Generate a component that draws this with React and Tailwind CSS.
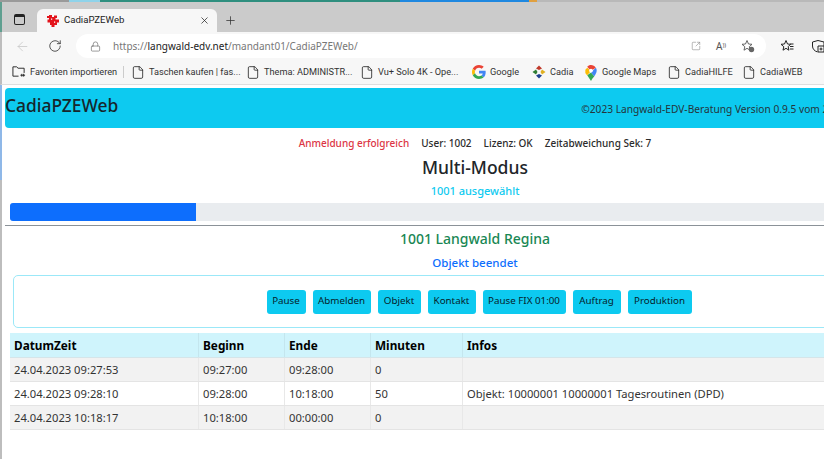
import React from "react";
import { ArrowLeft, RotateCw, Lock, X, Plus, File, SquareArrowOutUpRight } from "lucide-react";

const font = { fontFamily: '"Noto Sans", "Open Sans", sans-serif' };
const roboto = { fontFamily: 'Roboto, "Noto Sans", sans-serif' };

function FileIcon() {
  return <File className="w-[14px] h-[17px] text-[#222] shrink-0" strokeWidth={1.4} />;
}

function GoogleIcon() {
  return (
    <svg width="14" height="14" viewBox="0 0 48 48" className="shrink-0">
      <path fill="#EA4335" d="M24 9.5c3.5 0 6.7 1.2 9.2 3.6l6.9-6.9C35.9 2.4 30.5 0 24 0 14.6 0 6.5 5.4 2.6 13.2l8 6.2C12.500 13.600 17.800 9.500 24 9.500z" />
      <path fill="#4285F4" d="M46.900 24.500c0-1.600-.100-3.100-.400-4.500H24v9h12.900c-.600 3-2.200 5.500-4.700 7.200l7.700 6c4.500-4.200 7-10.300 7-17.700z" />
      <path fill="#FBBC05" d="M10.500 28.600c-.500-1.500-.800-3-.800-4.600s.300-3.200.800-4.600l-8-6.200C.900 16.500 0 20.100 0 24s.900 7.500 2.600 10.800l7.900-6.200z" />
      <path fill="#34A853" d="M24 48c6.500 0 11.900-2.100 15.900-5.800l-7.700-6c-2.200 1.400-4.900 2.300-8.200 2.300-6.200 0-11.500-4.100-13.400-9.800l-8 6.200C6.500 42.600 14.600 48 24 48z" />
    </svg>
  );
}

function CadiaIcon() {
  return (
    <svg width="14" height="14" viewBox="0 0 14 14" className="shrink-0">
      <path fill="#c0392b" d="M7 0.500 10 3.500 7 5 4 3.500z" />
      <path fill="#2e7d32" d="M0.500 7 4 4.500 5.500 7 4 9.500z" />
      <path fill="#e0b020" d="M13.500 7 10 4.500 8.500 7 10 9.500z" />
      <path fill="#1f3f8f" d="M7 13.500 4 10.500 7 9 10 10.500z" />
    </svg>
  );
}

function MapsIcon() {
  return (
    <svg width="14" height="17" viewBox="0 0 14 18" className="shrink-0">
      <path fill="#34A853" d="M3 12 7 18c1-2 2-3 3.500-5L7 9z" />
      <path fill="#FBBC05" d="M1 9.500C1.500 10.500 2.200 11 3 12l4-4.500L3 4 1 6z" />
      <path fill="#4285F4" d="M13 7c0-1.500-.500-2.500-1-3L7 9l3.500 4C12 11 13 9 13 7z" />
      <path fill="#EA4335" d="M12 4C11 2 9 1 7 1 5.500 1 4 1.700 3 3l4 4.500z" />
      <circle cx="7" cy="7" r="2" fill="#fff" />
    </svg>
  );
}

function Favicon() {
  return (
    <svg width="14" height="14" viewBox="0 0 14 14" className="shrink-0">
      <path fill="#e3131b" d="M3 1h3v2h2V1.500h3V4H9.500v1.500H13v3h-2V11H8.500v2h-3v-2H4V8.500H1.500v-3H3V4H1V2h2z" />
      <path fill="#fff" d="M5 4.500h1.200v1.200H5zM8 7.500h1.200v1.200H8z" />
    </svg>
  );
}

function Bookmark({ icon, label, labelWidth, className = "" }) {
  return (
    <div className={`flex items-center gap-[4px] shrink-0 ${className}`}>
      {icon}
      <span className={`text-[9.2px] text-[#333] whitespace-nowrap ${labelWidth}`} style={roboto}>
        {label}
      </span>
    </div>
  );
}

function Btn({ children, width }) {
  return (
    <div className={`h-[24px] flex items-center justify-center rounded-[3px] bg-[#0dcaf0] text-[9.8px] text-[#06222b] whitespace-nowrap ${width}`}>
      {children}
    </div>
  );
}

const cols = "grid grid-cols-[189px_86px_86px_92px_480px]";

function Row({ cells, shaded }) {
  return (
    <div className={`${cols} h-[24px] border-b border-[#e4e4e4] ${shaded ? "bg-[#f2f2f2]" : "bg-white"}`}>
      {cells.map((c, i) => (
        <div key={i} className="pl-[4px] pt-[1px] flex items-center border-r border-[#e8e8e8] text-[11.2px] text-[#333] whitespace-nowrap">
          {c}
        </div>
      ))}
    </div>
  );
}

export default function App() {
  return (
    <div className="w-[824px] h-[459px] overflow-hidden bg-white flex flex-col relative" style={font}>
      {/* desktop strip behind the window */}
      <div className="h-[2px] flex shrink-0 bg-[#b9b9b9]">
        <div className="w-[69px] bg-[#9a9a9a]" />
        <div className="w-[31px] bg-[#8fd3ea]" />
        <div className="w-[300px] bg-[#2f8f7f]" />
        <div className="w-[129px] bg-[#1f88e0]" />
        <div className="w-[8px] bg-[#e0a040]" />
      </div>

      {/* tab strip */}
      <div className="h-[30px] shrink-0 bg-[#cbcbcb] flex items-end pl-[9px] border-l-2 border-[#5f9f90]">
        <div className="w-[26px] h-[23px] flex items-center">
          <div className="w-[11px] h-[11px] border-[1.5px] border-[#222] rounded-[2px] border-t-[3px] ml-[3px] mb-[2px]" />
        </div>
        <div className="w-[180px] h-[23px] bg-[#f7f7f7] rounded-t-[6px] flex items-center pl-[9px] pr-[7px] shrink-0">
          <Favicon />
          <span className="ml-[4px] text-[9.6px] text-[#222]" style={roboto}>CadiaPZEWeb</span>
          <X className="w-[11px] h-[11px] ml-auto text-[#222]" strokeWidth={1.6} />
        </div>
        <div className="ml-[7px] h-[23px] flex items-center">
          <Plus className="w-[13px] h-[13px] text-[#333]" strokeWidth={1.4} />
        </div>
      </div>

      {/* toolbar */}
      <div className="h-[28px] shrink-0 bg-[#f7f7f7] flex items-center pl-[13px] border-l-2 border-[#bdbdbd]">
        <ArrowLeft className="w-[15px] h-[15px] text-[#c8c8c8] shrink-0" strokeWidth={1.3} />
        <RotateCw className="w-[14px] h-[14px] ml-[18px] text-[#333] shrink-0" strokeWidth={1.4} />
        <div className="w-[690px] shrink-0 h-[24px] ml-[14px] bg-white rounded-full flex items-center pl-[14px] pr-[11px]">
          <Lock className="w-[11px] h-[11px] text-[#666]" strokeWidth={1.4} />
          <span className="ml-[12px] text-[10px] text-[#777] whitespace-nowrap">
            https://<span className="text-[#222]">langwald-edv.net</span>/mandant01/CadiaPZEWeb/
          </span>
          <div className="ml-auto flex items-center gap-[15px]">
            <SquareArrowOutUpRight className="w-[10px] h-[10px] text-[#888]" strokeWidth={1.4} />
            <span className="text-[10px] text-[#555]">A<sup className="text-[6px]">))</sup></span>
            <svg width="14" height="14" viewBox="0 0 14 14">
              <path d="M6 1.500 7.500 5l3.500.3-2.700 2.400.8 3.500L6 9.300 3 11.200l.8-3.500L1 5.300 4.500 5z" fill="none" stroke="#555" strokeWidth="0.9" />
              <circle cx="10.500" cy="10.500" r="2.700" fill="#666" />
            </svg>
          </div>
        </div>
        <svg width="14" height="14" viewBox="0 0 14 14" className="ml-[14px] shrink-0">
          <path d="M6 1.500 7.500 5l3 .3-2.300 2.400.7 3.500L6 9.300 3 11.200l.8-3.500L1 5.300 4.500 5zM10 5h3.500M10 7.500h3.500M10 10h3.500" fill="none" stroke="#222" strokeWidth="1" />
        </svg>
        <svg width="14" height="14" viewBox="0 0 14 14" className="ml-[17px] shrink-0">
          <path d="M7 1.500 13 3v4M7 1.500 1.500 3v4c0 3 2 5 5 6M7 7h6v6H7zM10 8.500v3M8.500 10h3" fill="none" stroke="#222" strokeWidth="1" />
        </svg>
      </div>

      {/* bookmarks */}
      <div className="h-[25px] shrink-0 bg-[#f7f7f7] flex items-center border-l-2 border-[#bdbdbd] border-b border-b-[#dedede] pl-[10px]">
        <Bookmark
          icon={
            <svg width="14" height="13" viewBox="0 0 15 13" className="shrink-0">
              <path d="M1 11.500V1.500h4l1.500 1.500H13v5M1 11.500h6M9 10.500h5M10.500 9v3M12.500 9v3" fill="none" stroke="#222" strokeWidth="1" />
            </svg>
          }
          label="Favoriten importieren"
          labelWidth="w-[85px]"
        />
        <div className="w-px h-[12px] bg-[#ccc] ml-[8px]" />
        <Bookmark icon={<FileIcon />} label="Taschen kaufen | fas..." labelWidth="w-[85px]" className="ml-[7px]" />
        <Bookmark icon={<FileIcon />} label="Thema: ADMINISTR..." labelWidth="w-[85px]" className="ml-[12px]" />
        <Bookmark icon={<FileIcon />} label="Vu+ Solo 4K - Ope..." labelWidth="w-[82px]" className="ml-[11px]" />
        <Bookmark icon={<GoogleIcon />} label="Google" labelWidth="w-[30px]" className="ml-[12px]" />
        <Bookmark icon={<CadiaIcon />} label="Cadia" labelWidth="w-[22px]" className="ml-[12px]" />
        <Bookmark icon={<MapsIcon />} label="Google Maps" labelWidth="w-[53px]" className="ml-[12px]" />
        <Bookmark icon={<FileIcon />} label="CadiaHILFE" labelWidth="w-[45px]" className="ml-[12px]" />
        <Bookmark icon={<FileIcon />} label="CadiaWEB" labelWidth="w-[40px]" className="ml-[12px]" />
      </div>

      {/* page */}
      <div className="flex-1 border-l-2 border-[#bdbdbd] pt-[3px] pl-[3px] w-[945px]">
        <div className="h-[40px] bg-[#0dcaf0] rounded-[4px] flex items-center">
          <span className="text-[17.4px] font-medium text-[#16262c] leading-none -mt-[4px]">CadiaPZEWeb</span>
          <span className="ml-[463px] mt-[4px] text-[10.2px] text-[#24343a] whitespace-nowrap">
            ©2023 Langwald-EDV-Beratung Version 0.9.5 vom 24.04.2023
          </span>
        </div>

        <div className="flex justify-center gap-[12px] h-[16px] mt-[7px] items-center text-[10px] font-medium text-[#2b2b2b]">
          <span className="text-[#dc3545]">Anmeldung erfolgreich</span>
          <span>User: 1002</span>
          <span>Lizenz: OK</span>
          <span>Zeitabweichung Sek: 7</span>
        </div>
        <div className="mt-[2px] text-center text-[17.5px] font-medium text-[#212529] h-[28px] leading-[28px]">Multi-Modus</div>
        <div className="mt-[1px] text-center text-[11px] font-medium text-[#0dcaf0] h-[18px] leading-[18px]">1001 ausgewählt</div>

        <div className="ml-[5px] h-[18px] mt-[3px] bg-[#e9ecef] rounded-[3px] overflow-hidden">
          <div className="h-full w-[186px] bg-[#0d6efd]" />
        </div>
        <div className="h-px bg-[#8b9298] mt-[4px]" />

        <div className="text-center text-[14px] font-medium text-[#198754] h-[25px] leading-[25px]">1001 Langwald Regina</div>
        <div className="text-center text-[11.5px] font-medium text-[#0d6efd] h-[24px] leading-[24px]">Objekt beendet</div>

        <div className="ml-[8px] h-[53px] border border-[#9be8f8] rounded-[5px] flex items-center justify-center gap-[7px]">
          <Btn width="w-[39px]">Pause</Btn>
          <Btn width="w-[58px]">Abmelden</Btn>
          <Btn width="w-[43px]">Objekt</Btn>
          <Btn width="w-[48px]">Kontakt</Btn>
          <Btn width="w-[83px]">Pause FIX 01:00</Btn>
          <Btn width="w-[48px]">Auftrag</Btn>
          <Btn width="w-[64px]">Produktion</Btn>
        </div>

        <div className="ml-[5px] mt-[5px]">
          <div className={`${cols} h-[25px] bg-[#cff4fc] border-b border-[#d5e5e9]`}>
            {["DatumZeit", "Beginn", "Ende", "Minuten", "Infos"].map((h) => (
              <div key={h} className="pl-[4px] pt-[1px] flex items-center border-r border-[#c4e6ee] text-[11.8px] font-bold text-black">
                {h}
              </div>
            ))}
          </div>
          <Row shaded cells={["24.04.2023 09:27:53", "09:27:00", "09:28:00", "0", ""]} />
          <Row cells={["24.04.2023 09:28:10", "09:28:00", "10:18:00", "50", "Objekt: 10000001 10000001 Tagesroutinen (DPD)"]} />
          <Row shaded cells={["24.04.2023 10:18:17", "10:18:00", "00:00:00", "0", ""]} />
        </div>
      </div>

      {/* strip of the window behind, seen along the left edge */}
      <div className="absolute left-0 top-[85px] w-[2px] h-[95px] bg-[#8fb8e8]" />
    </div>
  );
}
